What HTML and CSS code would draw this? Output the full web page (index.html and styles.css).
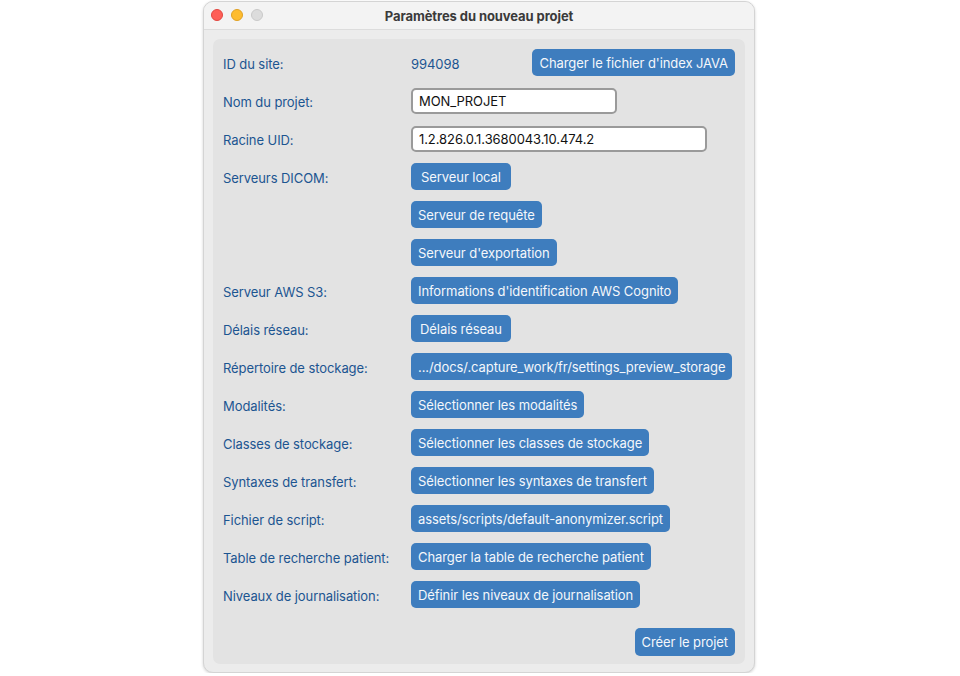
FILE: index.html
```html
<!DOCTYPE html>
<html lang="fr">
<head>
<meta charset="utf-8">
<title>Paramètres du nouveau projet</title>
<link rel="stylesheet" href="styles.css">
</head>
<body>
<div class="stage">
  <div class="window">
    <div class="titlebar">
      <div class="lights">
        <span class="light red"></span>
        <span class="light yellow"></span>
        <span class="light gray"></span>
      </div>
      <div class="title">Paramètres du nouveau projet</div>
    </div>
    <div class="panel">
      <div class="form">
        <div class="label">ID du site:</div>
        <div class="value split"><span class="text">994098</span><button class="btn">Charger le fichier d'index JAVA</button></div>

        <div class="label">Nom du projet:</div>
        <div class="value"><input class="field short" type="text" value="MON_PROJET"></div>

        <div class="label">Racine UID:</div>
        <div class="value"><input class="field long" type="text" value="1.2.826.0.1.3680043.10.474.2"></div>

        <div class="label">Serveurs DICOM:</div>
        <div class="value"><button class="btn">Serveur local</button></div>

        <div class="label"></div>
        <div class="value"><button class="btn">Serveur de requête</button></div>

        <div class="label"></div>
        <div class="value"><button class="btn">Serveur d'exportation</button></div>

        <div class="label">Serveur AWS S3:</div>
        <div class="value"><button class="btn">Informations d'identification AWS Cognito</button></div>

        <div class="label">Délais réseau:</div>
        <div class="value"><button class="btn">Délais réseau</button></div>

        <div class="label">Répertoire de stockage:</div>
        <div class="value"><button class="btn">.../docs/.capture_work/fr/settings_preview_storage</button></div>

        <div class="label">Modalités:</div>
        <div class="value"><button class="btn">Sélectionner les modalités</button></div>

        <div class="label">Classes de stockage:</div>
        <div class="value"><button class="btn">Sélectionner les classes de stockage</button></div>

        <div class="label">Syntaxes de transfert:</div>
        <div class="value"><button class="btn">Sélectionner les syntaxes de transfert</button></div>

        <div class="label">Fichier de script:</div>
        <div class="value"><button class="btn">assets/scripts/default-anonymizer.script</button></div>

        <div class="label">Table de recherche patient:</div>
        <div class="value"><button class="btn">Charger la table de recherche patient</button></div>

        <div class="label">Niveaux de journalisation:</div>
        <div class="value"><button class="btn">Définir les niveaux de journalisation</button></div>
      </div>
      <div class="footer">
        <button class="btn">Créer le projet</button>
      </div>
    </div>
  </div>
</div>
</body>
</html>
```

FILE: styles.css
```css
* { box-sizing: border-box; }
html, body {
  margin: 0;
  padding: 0;
  background: #ffffff;
  font-family: "Inter", "Liberation Sans", sans-serif;
  font-size: 13px;
  letter-spacing: -0.08px;
}
.stage {
  display: flex;
  justify-content: center;
  padding-top: 1px;
  padding-right: 2px;
}
.window {
  width: 552px;
  height: 672px;
  background: #ececec;
  border: 1px solid #d4d4d4;
  border-radius: 10px;
  box-shadow: 0 1px 3px rgba(0,0,0,0.18);
  display: flex;
  flex-direction: column;
  overflow: hidden;
}
.titlebar {
  height: 28px;
  flex: none;
  background: #f3f3f3;
  border-bottom: 1px solid #dcdcdc;
  display: flex;
  align-items: center;
  justify-content: center;
  position: relative;
}
.lights {
  position: absolute;
  left: 7px;
  top: 7px;
  display: flex;
  gap: 8px;
}
.light {
  width: 12px;
  height: 12px;
  border-radius: 50%;
  display: block;
}
.light.red { background: #fe5f57; border: 0.5px solid #e1463f; }
.light.yellow { background: #febc2e; border: 0.5px solid #dfa023; }
.light.gray { background: #dcdcdc; border: 0.5px solid #c9c9c9; }
.title {
  font-weight: 700;
  color: #3a3a3a;
  font-size: 13px;
}
.panel {
  margin: 9px 9px 8px 9px;
  flex: 1;
  background: #e3e3e3;
  border-radius: 7px;
  padding: 10px 10px 8px 10px;
  display: flex;
  flex-direction: column;
}
.form {
  display: grid;
  grid-template-columns: 188px 1fr;
  grid-auto-rows: 27px;
  row-gap: 11px;
}
.label {
  color: #1c5591;
  display: flex;
  align-items: center;
  padding-top: 2px;
  white-space: nowrap;
}
.value {
  display: flex;
  align-items: center;
}
.value.split {
  justify-content: space-between;
}
.text {
  color: #1c5591;
  padding-top: 2px;
}
.btn {
  font-family: inherit;
  font-size: 13px;
  letter-spacing: -0.08px;
  height: 27px;
  min-width: 100px;
  padding: 0 7px;
  background: #3e7dbe;
  color: #f4f7fb;
  border: none;
  border-radius: 5px;
  white-space: nowrap;
}
.field {
  font-family: inherit;
  font-size: 13px;
  letter-spacing: -0.08px;
  height: 26px;
  margin-top: 1px;
  background: #ffffff;
  color: #111111;
  border: 2px solid #9a9a9a;
  border-radius: 5px;
  padding: 0 6px;
}
.field.short { width: 206px; }
.field.long { width: 296px; }
.footer {
  margin-top: auto;
  display: flex;
  justify-content: flex-end;
}
.footer .btn { height: 28px; }
```
